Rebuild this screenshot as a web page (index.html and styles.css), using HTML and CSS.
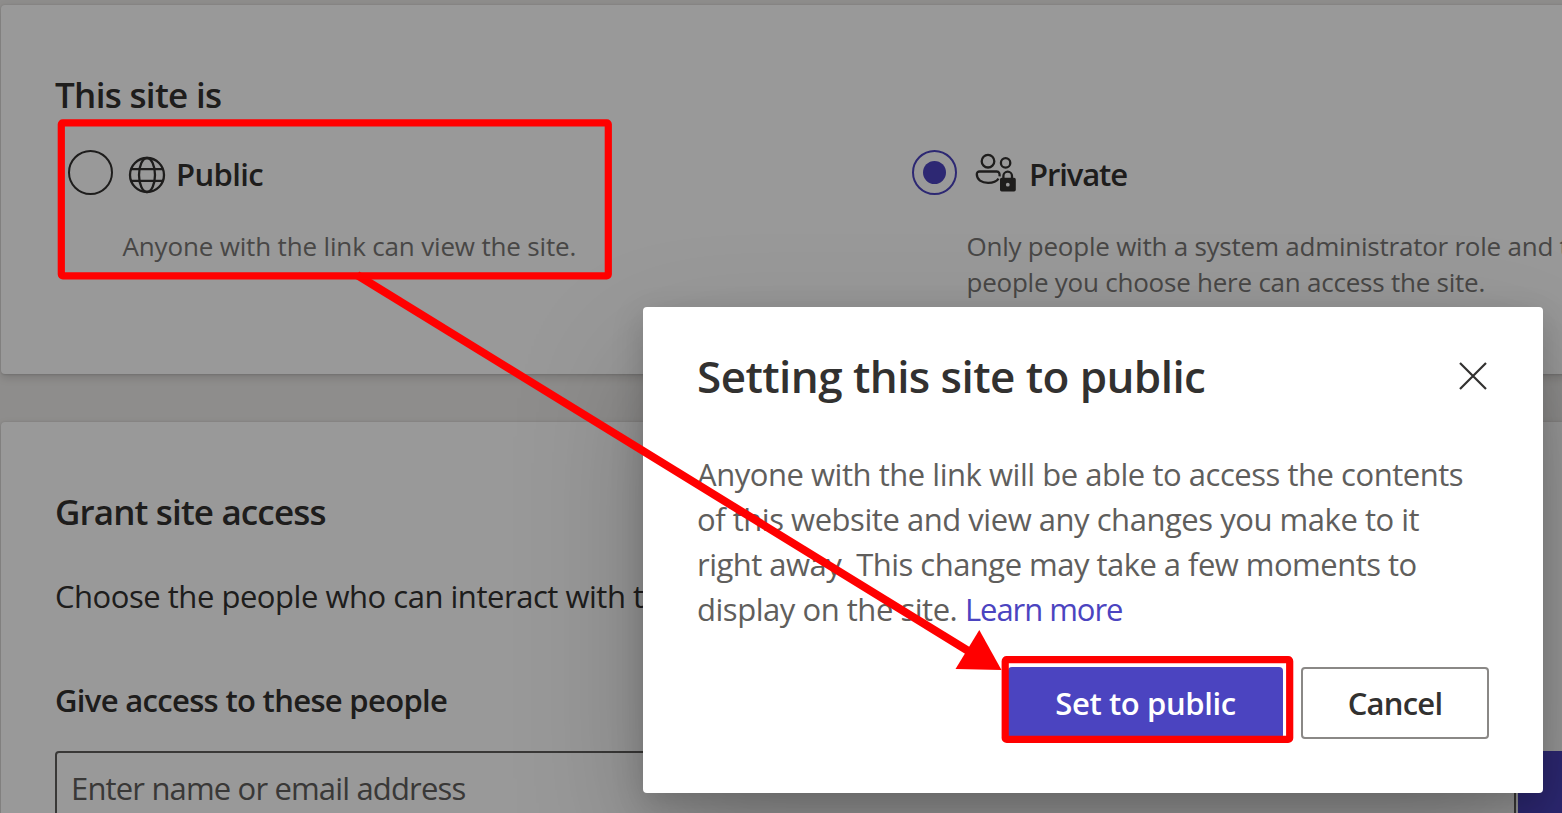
FILE: index.html
```html
<!DOCTYPE html>
<html lang="en">
<head>
<meta charset="utf-8">
<title>Site visibility</title>
<link rel="stylesheet" href="styles.css">
</head>
<body>
<main class="page">
  <section class="card visibility">
    <h2 class="card-title title-visibility">This site is</h2>
    <div class="options">
      <div class="option">
        <div class="option-head">
          <span class="radio"></span>
          <svg class="icon-globe" width="38" height="38" viewBox="0 0 38 38" fill="none" stroke="currentColor" stroke-width="2.300">
            <circle cx="19" cy="19" r="17"/>
            <ellipse cx="19" cy="19" rx="8" ry="17"/>
            <path d="M3.200 13.200h31.600M3.200 24.800h31.600"/>
          </svg>
          <span class="option-label label-public">Public</span>
        </div>
        <p class="option-text text-public">Anyone with the link can view the site.</p>
      </div>
      <div class="option">
        <div class="option-head">
          <span class="radio selected"></span>
          <svg class="icon-people" width="42" height="42" viewBox="0 0 42 42" fill="none" stroke="currentColor" stroke-width="2.300">
            <circle cx="13" cy="9.200" r="6.300"/>
            <circle cx="30.600" cy="10.900" r="4.700"/>
            <path d="M24.600 24.300c.2-3-.6-4.800-2.800-4.800H4.600c-1.800 0-2.800 1.200-2.800 2.800 0 5.400 4.800 8.600 11.300 8.600 4.700 0 8.600-1.500 10.400-4.300"/>
            <path d="M28.400 27v-3a4.300 4.300 0 0 1 8.600 0V27"/>
            <path fill="currentColor" stroke="none" fill-rule="evenodd" d="M26.700 25.800h12.400a1.700 1.700 0 0 1 1.700 1.700v10.300a1.700 1.700 0 0 1-1.700 1.700H26.700a1.700 1.700 0 0 1-1.700-1.700V27.500a1.700 1.700 0 0 1 1.700-1.700zM32.800 30.800a1.900 1.900 0 1 0 0 3.800 1.900 1.900 0 0 0 0-3.800z"/>
          </svg>
          <span class="option-label label-private">Private</span>
        </div>
        <p class="option-text text-private">Only people with a system administrator role and the<br>people you choose here can access the site.</p>
      </div>
    </div>
  </section>

  <section class="card access">
    <h2 class="card-title title-access">Grant site access</h2>
    <p class="access-text">Choose the people who can interact with t</p>
    <h3 class="field-label">Give access to these people</h3>
    <div class="field">
      <div class="input">Enter name or email address</div>
      <div class="field-button"></div>
    </div>
  </section>
</main>

<div class="overlay"></div>

<div class="dialog" role="dialog">
  <header class="dialog-head">
    <h1 class="dialog-title">Setting this site to public</h1>
    <svg class="icon-close" width="30" height="30" viewBox="0 0 30 30" fill="none" stroke="currentColor" stroke-width="2.200">
      <path d="M2 2l26 26M28 2L2 28"/>
    </svg>
  </header>
  <p class="dialog-text">Anyone with the link will be able to access the contents<br>of this website and view any changes you make to it<br><span class="tight">right away. This change may take a few moments to</span><br>display on the site. <a class="link">Learn more</a></p>
  <footer class="dialog-actions">
    <div class="button primary">Set to public</div>
    <div class="button secondary">Cancel</div>
  </footer>
</div>

<svg class="annotations" width="1562" height="813" viewBox="0 0 1562 813">
  <g fill="none" stroke="#f00">
    <rect x="61.300" y="122.800" width="547" height="153" rx="1.500" stroke-width="7.200"/>
    <rect x="1005.200" y="659.700" width="284.500" height="79.700" rx="1.500" stroke-width="7.200"/>
    <path d="M357 275L970 652" stroke-width="8"/>
  </g>
  <path d="M979.300 630L1001.500 670L955.500 669z" fill="#f00"/>
</svg>
</body>
</html>
```
FILE: styles.css
```css
* {
  box-sizing: border-box;
  margin: 0;
  padding: 0;
}

body {
  width: 1562px;
  height: 813px;
  overflow: hidden;
  background: #edebe9;
  color: #323130;
  font-family: "Open Sans", "Noto Sans", sans-serif;
  white-space: nowrap;
}

/* Page behind the dialog */
.page {
  display: flex;
  flex-direction: column;
  gap: 48px;
  height: 813px;
  padding: 5px 0 0 1px;
  overflow: hidden;
}

.card {
  flex: none;
  width: 1600px;
  background: #fff;
  border-radius: 4px;
  box-shadow: 0 3.6px 8.1px rgba(0, 0, 0, 0.132), 0 0.7px 2px rgba(0, 0, 0, 0.108);
}

.visibility {
  height: 369px;
  padding: 66px 0 0 54px;
}

.card-title {
  font-size: 35px;
  font-weight: 600;
  line-height: 48px;
}

.title-visibility { letter-spacing: -0.68px; }
.title-access { letter-spacing: -0.86px; }

.options {
  display: grid;
  grid-template-columns: 844px 1fr;
  padding: 31px 0 0 13px;
}

.option-head {
  display: flex;
  align-items: center;
  height: 45px;
}

.radio {
  display: flex;
  align-items: center;
  justify-content: center;
  width: 45px;
  height: 45px;
  border: 2px solid #323130;
  border-radius: 50%;
}

.radio.selected { border-color: #4b44c0; }

.radio.selected::after {
  content: "";
  width: 23px;
  height: 23px;
  border-radius: 50%;
  background: #4b44c0;
}

.icon-globe { margin: 5px 10px 0 15px; }
.icon-people { margin: 0 12px 0 18px; }

.option-label {
  padding-top: 3px;
  font-size: 31px;
  font-weight: 600;
  line-height: 42px;
}

.label-public { letter-spacing: -0.6px; }
.label-private { letter-spacing: -1.1px; }

.option-text {
  padding: 33px 0 0 54.500px;
  color: #797775;
  font-size: 26px;
  line-height: 36px;
}

.text-public { letter-spacing: -0.16px; }
.text-private { letter-spacing: -0.235px; }

.access {
  height: 460px;
  padding: 66px 0 0 54px;
}

.access-text {
  padding-top: 39px;
  font-size: 31px;
  line-height: 42px;
  letter-spacing: -0.47px;
}

.field-label {
  padding-top: 62px;
  font-size: 31px;
  font-weight: 600;
  line-height: 42px;
  letter-spacing: -0.675px;
}

.field {
  display: flex;
  gap: 2px;
  padding-top: 30px;
}

.input {
  width: 1461px;
  height: 72px;
  padding: 0 14px;
  border: 2px solid #605e5c;
  border-radius: 4px;
  color: #605e5c;
  font-size: 31px;
  line-height: 70px;
  letter-spacing: -0.84px;
}

.field-button {
  width: 80px;
  height: 72px;
  background: #4b44c0;
}

.overlay {
  position: absolute;
  inset: 0;
  background: rgba(0, 0, 0, 0.4);
}

/* Confirmation dialog */
.dialog {
  position: absolute;
  left: 643px;
  top: 307px;
  width: 900px;
  height: 486px;
  padding: 39px 54px 0;
  background: #fff;
  border-radius: 4px;
  box-shadow: 0 57.6px 129.6px rgba(0, 0, 0, 0.22), 0 10.8px 32.4px rgba(0, 0, 0, 0.18);
}

.dialog-head {
  display: flex;
  align-items: center;
  justify-content: space-between;
  height: 60px;
}

.dialog-title {
  font-size: 44px;
  font-weight: 600;
  line-height: 60px;
  letter-spacing: -0.56px;
}

.icon-close { margin-right: 1px; }

.dialog-text {
  padding-top: 46px;
  color: #605e5c;
  font-size: 31px;
  line-height: 45px;
  letter-spacing: -0.465px;
}

.tight { letter-spacing: -0.53px; }

.link {
  color: #4b44c0;
  letter-spacing: -1.05px;
}

.dialog-actions {
  display: flex;
  justify-content: flex-end;
  gap: 18px;
  padding-top: 35px;
}

.button {
  height: 72px;
  border-radius: 4px;
  font-size: 31px;
  font-weight: 600;
  line-height: 72px;
  text-align: center;
}

.primary {
  width: 275px;
  background: #4b44c0;
  color: #fff;
  letter-spacing: -0.38px;
}

.secondary {
  width: 188px;
  border: 2px solid #8a8886;
  line-height: 68px;
  letter-spacing: -0.75px;
}

/* Highlight boxes and arrow drawn over everything */
.annotations {
  position: absolute;
  left: 0;
  top: 0;
}
```
